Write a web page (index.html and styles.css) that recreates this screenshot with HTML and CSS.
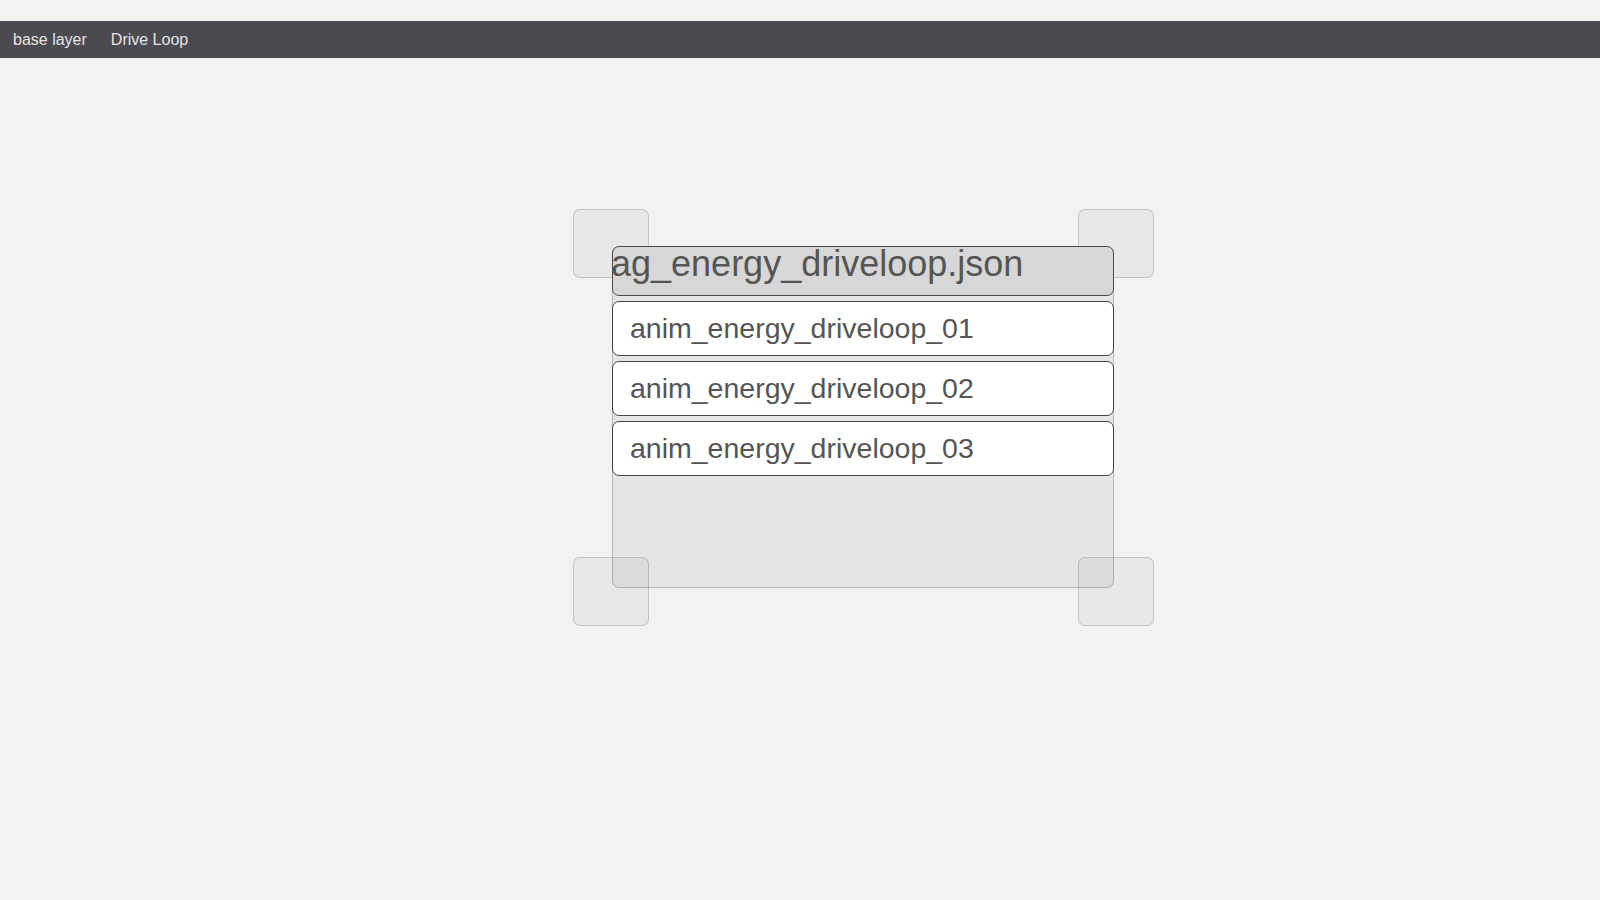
FILE: index.html
```html
<!DOCTYPE html>
<html>
<head>
<meta charset="utf-8">
<link rel="stylesheet" href="styles.css">
</head>
<body>
<div class="topbar">
  <span class="tab">base layer</span>
  <span class="tab">Drive Loop</span>
</div>
<div class="stage">
  <div class="widget">
    <div class="handle tl"></div>
    <div class="handle tr"></div>
    <div class="handle bl"></div>
    <div class="handle br"></div>
    <div class="panel">
      <div class="title">ag_energy_driveloop.json</div>
      <div class="row">anim_energy_driveloop_01</div>
      <div class="row">anim_energy_driveloop_02</div>
      <div class="row">anim_energy_driveloop_03</div>
    </div>
  </div>
</div>
</body>
</html>
```
FILE: styles.css
```css
html, body {
  margin: 0;
  padding: 0;
  background: #f2f2f2;
  font-family: "Liberation Sans", Arial, sans-serif;
}
body {
  width: 1600px;
  height: 900px;
  overflow: hidden;
}
.topbar {
  margin-top: 21px;
  height: 37px;
  background: #4b4a50;
  display: flex;
  align-items: center;
  gap: 24px;
  padding-left: 13px;
}
.tab {
  color: #e4e4e4;
  font-size: 16px;
  line-height: 37px;
}
.stage {
  padding-top: 188px;
  padding-left: 612px;
}
.widget {
  position: relative;
  width: 502px;
}
.handle {
  position: absolute;
  width: 76px;
  height: 69px;
  box-sizing: border-box;
  border: 1px solid rgba(0, 0, 0, 0.16);
  background: rgba(0, 0, 0, 0.04);
  border-radius: 7px;
}
.tl { left: -39px; top: -37px; }
.tr { left: 466px; top: -37px; }
.bl { left: -39px; top: 311px; }
.br { left: 466px; top: 311px; }
.panel {
  position: relative;
  height: 342px;
  box-sizing: border-box;
  border: 1px solid rgba(0, 0, 0, 0.2);
  border-top: none;
  border-radius: 7px;
  background: rgba(0, 0, 0, 0.05);
  display: flex;
  flex-direction: column;
  gap: 5px;
}
.title {
  height: 50px;
  box-sizing: border-box;
  margin: 0 -1px;
  border: 1.5px solid #4a4a4a;
  border-radius: 7px;
  background: #d7d7d7;
  color: #555;
  font-size: 36px;
  line-height: 33px;
  text-indent: -2px;
  white-space: nowrap;
}
.row {
  height: 55px;
  box-sizing: border-box;
  margin: 0 -1px;
  border: 1.5px solid #444;
  border-radius: 7px;
  background: #fff;
  color: #555;
  font-size: 28.5px;
  line-height: 53px;
  padding-left: 17px;
  white-space: nowrap;
}
```
